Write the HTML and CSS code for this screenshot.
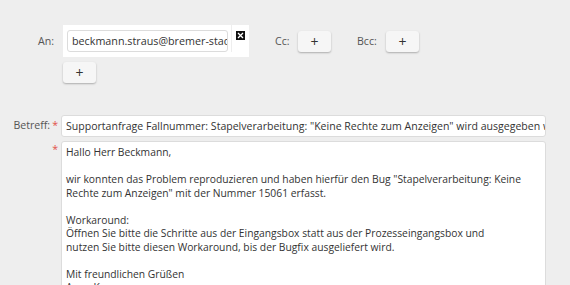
FILE: index.html
```html
<!DOCTYPE html>
<html lang="de">
<head>
<meta charset="utf-8">
<link rel="stylesheet" href="styles.css">
</head>
<body>
<div class="page">
  <div class="recipients">
    <div class="label-an">An:</div>
    <div class="to-field">
      <div class="chip-box">
        <div class="chip-input">beckmann.straus@bremer-stadt</div>
        <div class="chip-sep"></div>
        <div class="chip-remove">
          <svg width="9" height="9" viewBox="0 0 9 9"><rect width="9" height="9" fill="#111"/><path d="M2 2L7 7M7 2L2 7" stroke="#fff" stroke-width="1.3"/></svg>
        </div>
      </div>
      <button class="plus-btn">+</button>
    </div>
    <div class="label-cc">Cc:</div>
    <button class="plus-btn">+</button>
    <div class="label-bcc">Bcc:</div>
    <button class="plus-btn">+</button>
  </div>

  <div class="form-grid">
    <div class="f-label">Betreff:<span class="req">*</span></div>
    <div class="subject">Supportanfrage Fallnummer: Stapelverarbeitung: "Keine Rechte zum Anzeigen" wird ausgegeben wenn</div>
    <div class="f-label body-label"><span class="req">*</span></div>
    <div class="body-box">
      <p>Hallo Herr Beckmann,</p>
      <p>&nbsp;</p>
      <p>wir konnten das Problem reproduzieren und haben hierfür den Bug "Stapelverarbeitung: Keine<br>Rechte zum Anzeigen" mit der Nummer 15061 erfasst.</p>
      <p>&nbsp;</p>
      <p>Workaround:</p>
      <p>Öffnen Sie bitte die Schritte aus der Eingangsbox statt aus der Prozesseingangsbox und<br>nutzen Sie bitte diesen Workaround, bis der Bugfix ausgeliefert wird.</p>
      <p>&nbsp;</p>
      <p>Mit freundlichen Grüßen</p>
      <p>Anna Kunz</p>
    </div>
  </div>
</div>
</body>
</html>
```

FILE: styles.css
```css
html, body {
  margin: 0;
  padding: 0;
  background: #eeeeee;
  height: 100%;
  overflow: hidden;
}
body {
  font-family: "Open Sans", "Liberation Sans", sans-serif;
  font-size: 10.6px;
  color: #333;
}
.page {
  padding-top: 25px;
}
.recipients {
  display: flex;
  align-items: flex-start;
  padding-left: 38px;
}
.label-an {
  width: 25px;
  line-height: 32px;
  color: #555;
}
.to-field {
  display: flex;
  flex-direction: column;
  align-items: flex-start;
  gap: 5px;
}
.chip-box {
  display: flex;
  align-items: flex-start;
  width: 186px;
  height: 32px;
  background: #fff;
  box-sizing: border-box;
  padding: 5px 0 0 4px;
}
.chip-input {
  width: 161px;
  height: 22px;
  box-sizing: border-box;
  border: 1px solid #dcdcdc;
  border-radius: 3px;
  padding: 0 0 0 4px;
  line-height: 20px;
  white-space: nowrap;
  overflow: hidden;
  color: #333;
  font-size: 10.75px;
}
.chip-sep {
  width: 1px;
  height: 27px;
  margin: -5px 0 0 3px;
  background: #eee;
}
.chip-remove {
  margin-left: 4px;
  height: 9px;
  line-height: 0;
  margin-top: 1px;
}
.plus-btn {
  width: 33px;
  height: 21px;
  border: none;
  border-radius: 3px;
  background: #f6f6f6;
  box-shadow: 0 1px 2px rgba(0,0,0,0.28);
  font-family: "Open Sans", sans-serif;
  font-size: 14px;
  line-height: 19px;
  color: #333;
  padding: 0;
  margin: 0;
}
.recipients > .plus-btn {
  margin-top: 6px;
}
.label-cc, .label-bcc {
  line-height: 32px;
  color: #555;
}
.label-cc {
  margin-left: 26px;
  width: 23px;
}
.label-bcc {
  margin-left: 26px;
  width: 29px;
}
.form-grid {
  display: grid;
  grid-template-columns: 61px 485px;
  row-gap: 4px;
  margin-top: 32px;
}
.f-label {
  text-align: right;
  padding-right: 3px;
  color: #555;
  line-height: 21px;
}
.body-label {
  line-height: 16px;
}
.req {
  color: #e2504a;
  margin-left: 2px;
}
.subject {
  height: 22px;
  box-sizing: border-box;
  background: #fff;
  border: 1px solid #dcdcdc;
  border-radius: 3px;
  padding: 0 0 0 4px;
  line-height: 20px;
  white-space: nowrap;
  overflow: hidden;
  font-size: 10.55px;
}
.body-box {
  background: #fff;
  border: 1px solid #dcdcdc;
  border-radius: 3px;
  padding: 4px 4px 20px 4px;
  height: 200px;
  font-size: 10.3px;
}
.body-box p {
  margin: 0;
  line-height: 13.5px;
}
```
